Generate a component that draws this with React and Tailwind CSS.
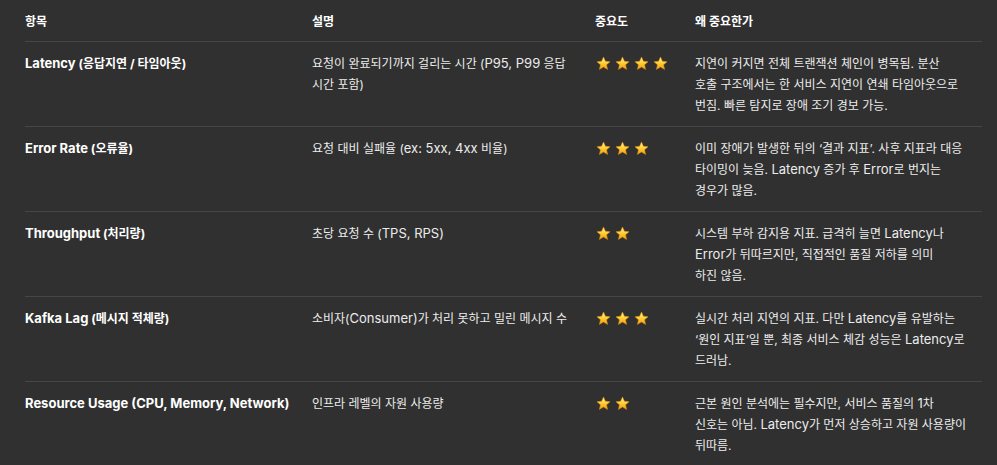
import React from "react";

const Star = () => (
  <svg width="15" height="15" viewBox="0 0 24 24" className="shrink-0">
    <defs>
      <linearGradient id="sg" x1="0" y1="0" x2="0" y2="1">
        <stop offset="0%" stopColor="#fff3a8" />
        <stop offset="45%" stopColor="#ffd43b" />
        <stop offset="100%" stopColor="#f39c12" />
      </linearGradient>
    </defs>
    <path
      d="M12 1.5l3.1 6.9 7.4.7-5.6 5 1.7 7.4L12 17.6l-6.6 3.9 1.7-7.4-5.6-5 7.4-.7z"
      fill="url(#sg)"
      stroke="#e08a0b"
      strokeWidth="0.8"
      strokeLinejoin="round"
    />
  </svg>
);

const rows = [
  {
    name: "Latency (응답지연 / 타임아웃)",
    desc: ["요청이 완료되기까지 걸리는 시간 (P95, P99 응답", "시간 포함)"],
    stars: 4,
    why: [
      "지연이 커지면 전체 트랜잭션 체인이 병목됨. 분산",
      "호출 구조에서는 한 서비스 지연이 연쇄 타임아웃으로",
      "번짐. 빠른 탐지로 장애 조기 경보 가능.",
    ],
  },
  {
    name: "Error Rate (오류율)",
    desc: ["요청 대비 실패율 (ex: 5xx, 4xx 비율)"],
    stars: 3,
    why: [
      "이미 장애가 발생한 뒤의 ‘결과 지표’. 사후 지표라 대응",
      "타이밍이 늦음. Latency 증가 후 Error로 번지는",
      "경우가 많음.",
    ],
  },
  {
    name: "Throughput (처리량)",
    desc: ["초당 요청 수 (TPS, RPS)"],
    stars: 2,
    why: [
      "시스템 부하 감지용 지표. 급격히 늘면 Latency나",
      "Error가 뒤따르지만, 직접적인 품질 저하를 의미",
      "하진 않음.",
    ],
  },
  {
    name: "Kafka Lag (메시지 적체량)",
    desc: ["소비자(Consumer)가 처리 못하고 밀린 메시지 수"],
    stars: 3,
    why: [
      "실시간 처리 지연의 지표. 다만 Latency를 유발하는",
      "‘원인 지표’일 뿐, 최종 서비스 체감 성능은 Latency로",
      "드러남.",
    ],
  },
  {
    name: "Resource Usage (CPU, Memory, Network)",
    desc: ["인프라 레벨의 자원 사용량"],
    stars: 2,
    why: [
      "근본 원인 분석에는 필수지만, 서비스 품질의 1차",
      "신호는 아님. Latency가 먼저 상승하고 자원 사용량이",
      "뒤따름.",
    ],
  },
];

const Mixed = ({ text }) => {
  const parts = text.split(/([A-Za-z0-9][A-Za-z0-9 (),.:/\-]*[A-Za-z0-9)]|[A-Za-z0-9])/);
  return (
    <>
      {parts.map((p, i) =>
        i % 2 === 1 ? (
          <span key={i} className="text-[13px]">
            {p}
          </span>
        ) : (
          <span key={i}>{p}</span>
        )
      )}
    </>
  );
};

const Lines = ({ lines }) => (
  <div>
    {lines.map((l, i) => (
      <div key={i} className="whitespace-nowrap">
        <Mixed text={l} />
      </div>
    ))}
  </div>
);

export default function App() {
  return (
    <div
      className="w-[997px] h-[465px] overflow-hidden bg-[#303030] text-[#ececec] pl-[25px] text-[12px] leading-[21px]"
      style={{ fontFamily: '"Inter", "Noto Sans CJK KR", sans-serif' }}
    >
      <div className="w-[957px]">
        <div className="grid grid-cols-[287px_283px_100px_287px] pt-[11px] pb-[9px] font-bold text-white">
          <div>항목</div>
          <div>설명</div>
          <div>중요도</div>
          <div>왜 중요한가</div>
        </div>
        {rows.map((r, i) => (
          <div
            key={i}
            className="grid grid-cols-[287px_283px_100px_287px] border-t border-[#464646] pt-[11px] pb-[10px] min-h-[85px]"
          >
            <div className="font-bold text-white whitespace-nowrap">
              <Mixed text={r.name} />
            </div>
            <Lines lines={r.desc} />
            <div className="flex h-[21px] items-center gap-[4px] pl-[1px]">
              {Array.from({ length: r.stars }).map((_, k) => (
                <Star key={k} />
              ))}
            </div>
            <Lines lines={r.why} />
          </div>
        ))}
      </div>
    </div>
  );
}
